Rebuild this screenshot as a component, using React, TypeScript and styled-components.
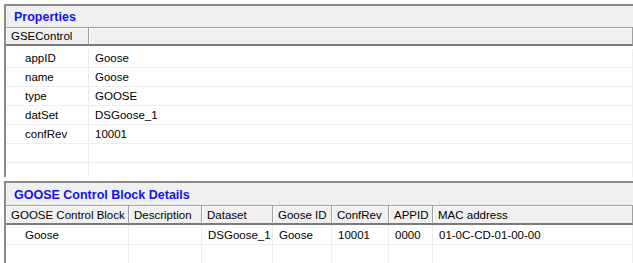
import styled, { createGlobalStyle } from 'styled-components'

const GlobalStyle = createGlobalStyle`
  html, body {
    margin: 0;
    padding: 0;
    background: #ffffff;
    font-family: "Liberation Sans", Arial, sans-serif;
    font-size: 11.5px;
    color: #000;
  }
`

const Page = styled.div`
  width: 633px;
  height: 263px;
  overflow: hidden;
  padding: 4px 0 0 4px;
  box-sizing: border-box;
  display: flex;
  flex-direction: column;
  gap: 4px;
`

const Panel = styled.section<{ $height: number }>`
  height: ${p => p.$height}px;
  flex: none;
  border-top: 2px solid #8a8a8a;
  border-left: 2px solid #8a8a8a;
  background: #f0f0f0;
  overflow: hidden;
  display: flex;
  flex-direction: column;
`

const Title = styled.div<{ $h: number }>`
  height: ${p => p.$h}px;
  flex: none;
  display: flex;
  align-items: center;
  padding: 1px 0 0 8px;
  box-sizing: border-box;
  border-bottom: 1px solid #a0a0a0;
  color: #1010ff;
  font-weight: bold;
  font-size: 12.5px;
`

const Grid = styled.div<{ $cols: string }>`
  display: grid;
  grid-template-columns: ${p => p.$cols};
  flex: 1;
  align-content: start;
  background: #ffffff;
`

const HeadCell = styled.div<{ $h: number }>`
  height: ${p => p.$h}px;
  display: flex;
  align-items: center;
  padding-left: 5px;
  background: #f0f0f0;
  border-right: 1px solid #a0a0a0;
  box-shadow: inset 1px 1px 0 #ffffff;
  border-bottom: 2px solid #7a7a7a;
  white-space: nowrap;
  overflow: hidden;
`

const Spacer = styled.div`
  grid-column: 1 / -1;
  height: 3px;
  background: #ffffff;
`

const Cell = styled.div<{ $indent?: boolean; $h: number }>`
  height: ${p => p.$h}px;
  display: flex;
  align-items: center;
  padding-left: ${p => (p.$indent ? 19 : 6)}px;
  border-bottom: 1px solid #ededed;
  border-right: 1px solid #ededed;
  white-space: nowrap;
  overflow: hidden;
`

const props: [string, string][] = [
  ['appID', 'Goose'],
  ['name', 'Goose'],
  ['type', 'GOOSE'],
  ['datSet', 'DSGoose_1'],
  ['confRev', '10001'],
  ['', ''],
  ['', ''],
]

const gooseHeads = ['GOOSE Control Block', 'Description', 'Dataset', 'Goose ID', 'ConfRev', 'APPID', 'MAC address']
const gooseRows = [
  ['Goose', '', 'DSGoose_1', 'Goose', '10001', '0000', '01-0C-CD-01-00-00'],
  ['', '', '', '', '', '', ''],
]

export default function App() {
  return (
    <Page>
      <GlobalStyle />
      <Panel $height={171}>
        <Title $h={22}>Properties</Title>
        <Grid $cols="83px 1fr">
          <HeadCell $h={16}>GSEControl</HeadCell>
          <HeadCell $h={16} />
          <Spacer />
          {props.map(([k, v], i) => [
            <Cell key={'k' + i} $h={18} $indent>{k}</Cell>,
            <Cell key={'v' + i} $h={18}>{v}</Cell>,
          ])}
        </Grid>
      </Panel>
      <Panel $height={90}>
        <Title $h={23}>GOOSE Control Block Details</Title>
        <Grid $cols="123px 73px 71px 59px 57px 44px 1fr">
          {gooseHeads.map(h => (
            <HeadCell key={h} $h={17}>{h}</HeadCell>
          ))}
          {gooseRows.map((r, i) =>
            r.map((c, j) => (
              <Cell key={i + '-' + j} $h={19} $indent={j === 0}>
                {c}
              </Cell>
            ))
          )}
        </Grid>
      </Panel>
    </Page>
  )
}
